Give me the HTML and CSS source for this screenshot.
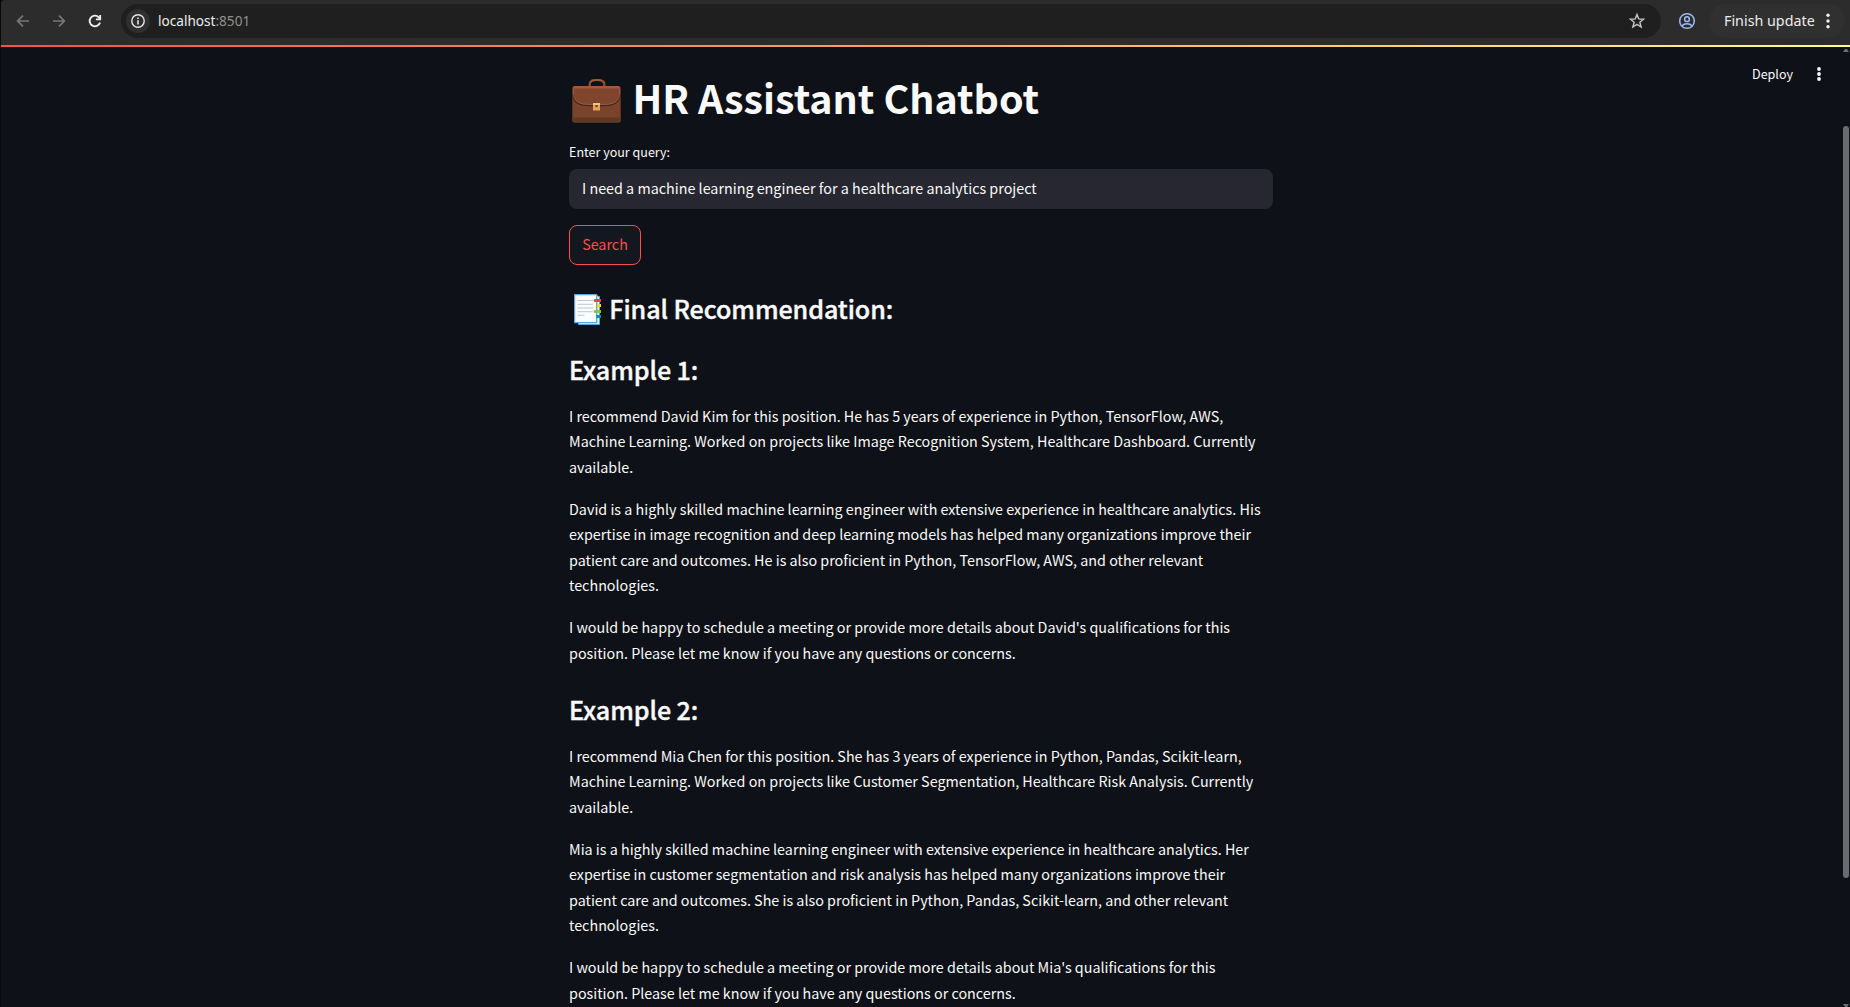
FILE: index.html
```
<!DOCTYPE html>
<html lang="en">
<head>
<meta charset="utf-8">
<title>HR Assistant Chatbot</title>
<link rel="stylesheet" href="styles.css">
</head>
<body>
<header class="browser-bar">
  <svg class="nav-icon" width="20" height="20" viewBox="0 0 20 20"><path d="M16 10H5M10 4.6 4.6 10l5.4 5.4" fill="none" stroke="#777" stroke-width="1.7"/></svg>
  <svg class="nav-icon" width="20" height="20" viewBox="0 0 20 20"><path d="M4 10h11M10 4.6l5.4 5.4-5.4 5.4" fill="none" stroke="#777" stroke-width="1.7"/></svg>
  <svg class="nav-icon" width="20" height="20" viewBox="0 0 20 20"><path d="M15 11.6A5.3 5.3 0 1 1 13.8 6.3L15.2 7.8" fill="none" stroke="#f0f0f0" stroke-width="1.9"/><path d="M16.1 4v5.2h-5.2V7.5h3.4V4z" fill="#f0f0f0"/></svg>
  <div class="address">
    <span class="site-info"><svg width="16" height="16" viewBox="0 0 16 16"><circle cx="8" cy="8" r="6.2" fill="none" stroke="#e6e6e6" stroke-width="1.4"/><path d="M7.2 7.2h1.6v4.2H7.2zM7.2 4.6h1.6v1.5H7.2z" fill="#e6e6e6"/></svg></span>
    <span class="url">localhost<span class="port">:8501</span></span>
    <svg class="star" width="18" height="18" viewBox="0 0 18 18"><path d="M9 2.4l1.75 4.5 4.85.3-3.75 3.1 1.25 4.7L9 12.4 4.9 15l1.25-4.7L2.4 7.2l4.85-.3z" fill="none" stroke="#c7c7c7" stroke-width="1.4"/></svg>
  </div>
  <svg class="profile" width="18" height="18" viewBox="0 0 18 18" fill="none" stroke="#9dbcf2" stroke-width="1.5"><circle cx="9" cy="9" r="7.3"/><circle cx="9" cy="7.2" r="2.4"/><path d="M3.8 14c1.3-1.5 3.1-2.2 5.2-2.2s3.900.7 5.200 2.200"/></svg>
  <div class="update"><span>Finish update</span><svg width="4" height="16" viewBox="0 0 4 16" fill="#f0f0f0"><circle cx="2" cy="2.300" r="1.700"/><circle cx="2" cy="8" r="1.700"/><circle cx="2" cy="13.700" r="1.700"/></svg></div>
</header>
<div class="decoration"></div>
<div class="app">
  <main class="content">
    <h1 class="title">
      <svg class="briefcase" width="49" height="44" viewBox="0 0 49 44">
        <path d="M17.700 8V5.200C17.700 2 20.500.9 25 .9s7.300 1.100 7.300 4.300V8" fill="none" stroke="#8a4b2f" stroke-width="2.400"/>
        <path d="M18.500 3.300C20 1.400 22 1 25 1s5 .4 6.500 2.300" fill="none" stroke="#b0663f" stroke-width="1"/>
        <rect x=".3" y="7" width="48.400" height="36.600" rx="2.500" fill="#7a432b"/>
        <path d="M.3 38.500h48.400v2.600q0 2.500-2.500 2.500H2.800Q.3 43.600.3 41.100z" fill="#5e3a25"/>
        <path d="M1 9.500Q1 7 3.500 7h42Q48 7 48 9.500v7c0 6-5 9.500-13 10q-10.500.5-21 0C6 26 1 22.500 1 16.500z" fill="#7f462d"/>
        <path d="M1 9.500Q1 7 3.500 7h42Q48 7 48 9.500z" fill="#a5593a"/>
        <path d="M1 15c0 7.500 5 10.900 13 11.400q10.500.6 21 0C43 25.900 48 22.500 48 15" fill="none" stroke="#3f281e" stroke-width="1.300"/>
        <path d="M1.500 10v5.200c0 6.600 5 9.600 12.500 10.100q10.500.6 21 0c7.500-.5 12.500-3.500 12.500-10.100V10" fill="none" stroke="#a0644a" stroke-width=".7"/>
        <rect x="21" y="24" width="7" height="7.500" rx=".6" fill="#e2a35c"/>
        <path d="M21 24h7v2h-7z" fill="#f4c27c"/><path d="M23.300 26h2.400v2.200h-2.400z" fill="#6d472b"/>
      </svg>HR Assistant Chatbot</h1>
    <label class="label" for="query">Enter your query:</label>
    <input class="query" id="query" type="text" value="I need a machine learning engineer for a healthcare analytics project">
    <button class="search">Search</button>
    <h2 class="heading final">
      <svg class="tabs" width="27" height="31" viewBox="0 0 27 31">
        <path d="M4.500 2.500h21v28h-21z" fill="#e8f3fa" stroke="#5aa5dc"/>
        <path d="M2.500 1.500h21.500v27.500H2.500z" fill="#cfe3f1"/>
        <path d="M.6.600h22v28H.6z" fill="#fcfdfe" stroke="#5aa5dc" stroke-width="1.200"/>
        <path d="M3.500 6.500h15.500M3.500 10.300h15.500M3.500 14h15.500M3.500 17.700h15.500M3.500 21.300h7" stroke="#bcc9d1" stroke-width="1"/>
        <path d="M20.500 5h6.500v3h-6.500l-1-1.500z" fill="#f44336"/>
        <path d="M23 10h4v3h-4z" fill="#fdd040"/>
        <path d="M20.500 16h6.500v3h-6.500l-1-1.500z" fill="#8bc34a"/>
        <path d="M22.500 21h4.500v3h-4.500z" fill="#0288e6"/>
      </svg>Final Recommendation:</h2>
    <section class="answer">
      <h2 class="heading">Example 1:</h2>
      <p>I recommend David Kim for this position. He has 5 years of experience in Python, TensorFlow, AWS, Machine Learning. Worked on projects like Image Recognition System, Healthcare Dashboard. Currently available.</p>
      <p>David is a highly skilled machine learning engineer with extensive experience in healthcare analytics. His expertise in image recognition and deep learning models has helped many organizations improve their patient care and outcomes. He is also proficient in Python, TensorFlow, AWS, and other relevant technologies.</p>
      <p>I would be happy to schedule a meeting or provide more details about David's qualifications for this position. Please let me know if you have any questions or concerns.</p>
      <h2 class="heading">Example 2:</h2>
      <p>I recommend Mia Chen for this position. She has 3 years of experience in Python, Pandas, Scikit-learn, Machine Learning. Worked on projects like Customer Segmentation, Healthcare Risk Analysis. Currently available.</p>
      <p>Mia is a highly skilled machine learning engineer with extensive experience in healthcare analytics. Her expertise in customer segmentation and risk analysis has helped many organizations improve their patient care and outcomes. She is also proficient in Python, Pandas, Scikit-learn, and other relevant technologies.</p>
      <p>I would be happy to schedule a meeting or provide more details about Mia's qualifications for this position. Please let me know if you have any questions or concerns.</p>
    </section>
  </main>
  <div class="toolbar">Deploy<svg width="4" height="14" viewBox="0 0 4 14" fill="#fafafa"><circle cx="2" cy="2" r="1.900"/><circle cx="2" cy="7" r="1.900"/><circle cx="2" cy="12" r="1.900"/></svg></div>
  <div class="scrollbar">
    <svg width="6" height="3" viewBox="0 0 6 3"><path d="M0 3 2 0h2l2 3z" fill="#6b6c6f"/></svg>
    <div class="thumb"></div>
    <svg width="6" height="3" viewBox="0 0 6 3"><path d="M0 0h6L4 3H2z" fill="#6b6c6f"/></svg>
  </div>
</div>
</body>
</html>
```
FILE: styles.css
```
* { box-sizing: border-box; }

body {
  margin: 0;
  height: 1007px;
  overflow: hidden;
  display: flex;
  flex-direction: column;
  background: #0e1117;
  color: #fafafa;
  font-family: "Noto Sans CJK SC", "Noto Sans", sans-serif;
  font-size: 14.33px;
  border-left: 1px solid #08090c;
}

svg { display: block; flex: none; }

/* Browser toolbar */
.browser-bar {
  flex: none;
  height: 45px;
  padding: 4px 5px 7px 12px;
  display: flex;
  align-items: center;
  background: #2c2c2c;
  border-top-left-radius: 4px;
  font-family: "Noto Sans", sans-serif;
}
.nav-icon { margin-right: 16px; }
.address {
  width: 1540px;
  height: 34px;
  display: flex;
  align-items: center;
  padding: 0 15px 0 5px;
  border-radius: 17px;
  background: #1f1f1f;
}
.site-info {
  width: 24px;
  height: 24px;
  margin-right: 8px;
  display: grid;
  place-items: center;
  border-radius: 50%;
  background: #2f2f2f;
}
.url {
  padding-bottom: 1px;
  font-size: 13.6px;
  line-height: 18px;
  color: #ececec;
}
.port { color: #8f8f8f; }
.star { margin-left: auto; }
.profile { margin: 0 13px 0 17px; }
.update {
  width: 136px;
  height: 34px;
  display: flex;
  align-items: center;
  justify-content: space-between;
  padding: 0 15px;
  border-radius: 17px;
  background: #303030;
  color: #ececec;
  font-size: 14.3px;
  line-height: 18px;
  white-space: nowrap;
}
.update span { padding-bottom: 1px; }

.decoration {
  flex: none;
  height: 2px;
  background: linear-gradient(90deg, #ff4b4b, #fffd80);
}

/* Application */
.app {
  flex: 1;
  min-height: 0;
  position: relative;
  overflow: hidden;
}
.content {
  width: 704px;
  margin-left: 568px;
  padding-top: 24px;
  display: flex;
  flex-direction: column;
}
.title {
  margin: 0 0 17.200px;
  display: flex;
  align-items: flex-start;
  font-size: 39.41px;
  line-height: 52.8px;
  font-weight: 700;
}
.briefcase { margin: 7.500px 11.400px 0 3px; }
.label {
  height: 28px;
  font-size: 12.54px;
  line-height: 21px;
}
.query {
  width: 704px;
  height: 40px;
  padding: 0 13px 2px;
  border: 0;
  border-radius: 8px;
  outline: 0;
  background: #262730;
  color: #fafafa;
  font: inherit;
}
.search {
  width: 72px;
  height: 40px;
  margin-top: 16px;
  padding: 0 0 2px;
  border: 1px solid #ff4b4b;
  border-radius: 8px;
  background: #131720;
  color: #ff4b4b;
  font: inherit;
}
.heading {
  margin: 0;
  padding: 11.500px 0 16.500px;
  font-size: 25.08px;
  line-height: 33.600px;
  font-weight: 500;
  letter-spacing: -0.07px;
  -webkit-text-stroke: 0.4px currentColor;
}
.final {
  display: flex;
  align-items: flex-start;
  padding: 26.600px 0 16.100px;
}
.tabs { margin: 2.400px 8.300px 0 5px; }
.answer p {
  margin: 0 0 16px;
  line-height: 25.600px;
}

.toolbar {
  position: absolute;
  top: 16px;
  right: 29px;
  display: flex;
  align-items: center;
  gap: 24px;
  font-size: 12.54px;
  line-height: 22px;
}
.scrollbar {
  position: absolute;
  top: 2px;
  right: 1px;
  bottom: 0;
  width: 6px;
  display: flex;
  flex-direction: column;
  justify-content: space-between;
}
.thumb {
  height: 752px;
  margin-bottom: 53px;
  border-radius: 3px;
  background: #6b6c6f;
}
```
